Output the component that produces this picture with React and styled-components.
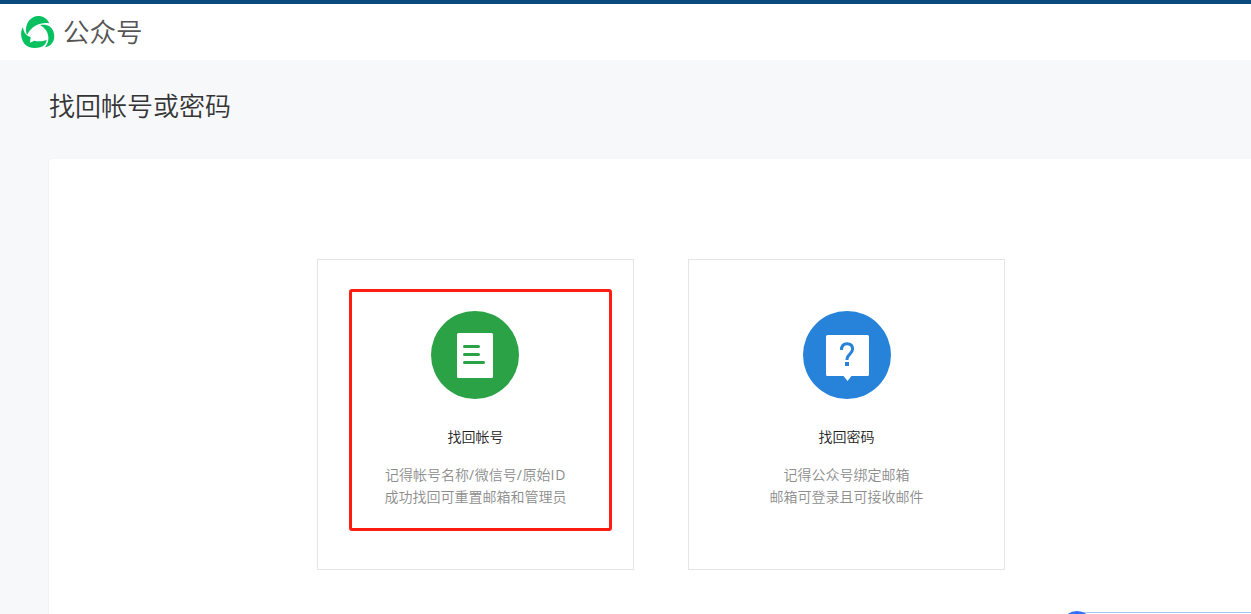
import React from "react";
import styled, { createGlobalStyle } from "styled-components";

const GlobalStyle = createGlobalStyle`
  * {
    box-sizing: border-box;
  }
  body {
    margin: 0;
    overflow: hidden;
    background-color: #f6f8fa;
    font-family: "Noto Sans CJK SC", sans-serif;
    font-weight: 350;
  }
  h1, h2, p {
    margin: 0;
    font-weight: 350;
  }
`;
const Page = styled.div`
  position: relative;
  display: flex;
  flex-direction: column;
  height: 614px;
  overflow: hidden;
`;
const Header = styled.header`
  display: flex;
  align-items: center;
  flex-shrink: 0;
  gap: 8px;
  height: 60px;
  padding-left: 21px;
  border-top: 4px solid #0b4a7c;
  background-color: #fff;
`;
const Brand = styled.span`
  height: 40px;
  font-size: 26.5px;
  line-height: 38px;
  color: #555;
`;
const Main = styled.main`
  display: flex;
  flex-direction: column;
  flex: 1;
  padding-left: 49px;
`;
const Title = styled.h1`
  height: 99px;
  padding-top: 26px;
  font-size: 26px;
  line-height: 38px;
  color: #353535;
`;
const Panel = styled.section`
  display: flex;
  align-items: flex-start;
  flex: 1;
  gap: 54px;
  padding: 100px 0 0 268px;
  border-top-left-radius: 4px;
  background-color: #fff;
  box-shadow: 0 1px 2px rgba(150, 150, 150, 0.2);
`;
const Card = styled.a`
  position: relative;
  display: flex;
  flex-direction: column;
  align-items: center;
  width: 317px;
  height: 311px;
  padding-top: 51px;
  border: 1px solid #e4e5e7;
  text-align: center;
  cursor: pointer;
`;
const IconCircle = styled.div`
  display: flex;
  width: 88px;
  height: 88px;
  margin-left: ${(p) => p.$shift || 0}px;
  border-radius: 50%;
  background-color: ${(p) => p.$color};
`;
const CardTitle = styled.h2`
  margin-top: 26px;
  font-size: 14px;
  line-height: 22px;
  color: #222;
`;
const CardText = styled.p`
  margin-top: 16px;
  font-size: 14px;
  line-height: 22px;
  color: #8d8d8d;
`;
const Latin = styled.span`
  font-family: "Open Sans", sans-serif;
  font-weight: 400;
  line-height: 1;
  letter-spacing: 0.7px;
`;
const Highlight = styled.div`
  position: absolute;
  top: 29px;
  left: 31px;
  width: 263px;
  height: 242px;
  border: 3px solid #ff1d12;
  border-radius: 3px;
`;
const WidgetLine = styled.div`
  position: absolute;
  left: 1077px;
  right: 0;
  top: 612px;
  height: 2px;
  border-top: 1px solid #a5c5fb;
`;
const WidgetDot = styled.div`
  position: absolute;
  left: 1061px;
  top: 611px;
  width: 32px;
  height: 32px;
  border-radius: 50%;
  background-color: #3370ff;
`;

const Logo = () => (
  <svg width="34" height="34" viewBox="0 0 102 102" fill="#07c160">
    <path d="M18 60C12 46 15 28 25 16C33 7 42 3 51 3c16 0 28 8 34 22C62 21 34 29 18 60z" />
    <path d="M6 36C-3 50-1 72 10 86c12 16 46 17 61 3 3-4 5-8 6-14-14 5-26 5-37 2l-13 6 2-17C16 64 7 51 6 36z" />
    <path d="M57 30c20-4 35 4 40 19 8 23-2 44-25 48C91 73 82 43 57 30z" />
  </svg>
);

const DocumentIcon = () => (
  <svg width="88" height="88" viewBox="0 0 88 88">
    <rect x="26" y="22" width="36" height="45" rx="1.5" fill="#fff" />
    <g stroke="#2ba245" strokeWidth="3" strokeLinecap="round">
      <path d="M33.5 35.5h14M33.5 43.5h14M33.5 51.5h19" />
    </g>
  </svg>
);

const QuestionIcon = () => (
  <svg width="88" height="88" viewBox="0 0 88 88">
    <path
      d="M24.5 24h40a1.5 1.5 0 0 1 1.5 1.5v38a1.5 1.5 0 0 1-1.5 1.5H48.5l-4 5-4-5h-16a1.5 1.5 0 0 1-1.5-1.5v-38a1.5 1.5 0 0 1 1.5-1.5z"
      fill="#fff"
    />
    <path
      d="M38.5 39c0-4 2-6.2 5.500-6.200s5.600 2 5.600 5.300c0 4.900-5.600 5-5.600 10v1"
      fill="none"
      stroke="#2782d9"
      strokeWidth="3"
    />
    <rect x="42" y="51" width="4" height="4" fill="#2782d9" />
  </svg>
);

const App = () => {
  return (
    <>
      <GlobalStyle />
      <Page>
        <Header>
          <Logo />
          <Brand>公众号</Brand>
        </Header>
        <Main>
          <Title>找回帐号或密码</Title>
          <Panel>
            <Card>
              <IconCircle $color="#2ba245" $shift={-1}>
                <DocumentIcon />
              </IconCircle>
              <CardTitle>找回帐号</CardTitle>
              <CardText>
                记得帐号名称<Latin>/</Latin>微信号<Latin>/</Latin>原始
                <Latin>ID</Latin>
                <br />
                成功找回可重置邮箱和管理员
              </CardText>
              <Highlight />
            </Card>
            <Card>
              <IconCircle $color="#2782d9" $shift={1}>
                <QuestionIcon />
              </IconCircle>
              <CardTitle>找回密码</CardTitle>
              <CardText>
                记得公众号绑定邮箱
                <br />
                邮箱可登录且可接收邮件
              </CardText>
            </Card>
          </Panel>
        </Main>
        <WidgetLine />
        <WidgetDot />
      </Page>
    </>
  );
};

export default App;
